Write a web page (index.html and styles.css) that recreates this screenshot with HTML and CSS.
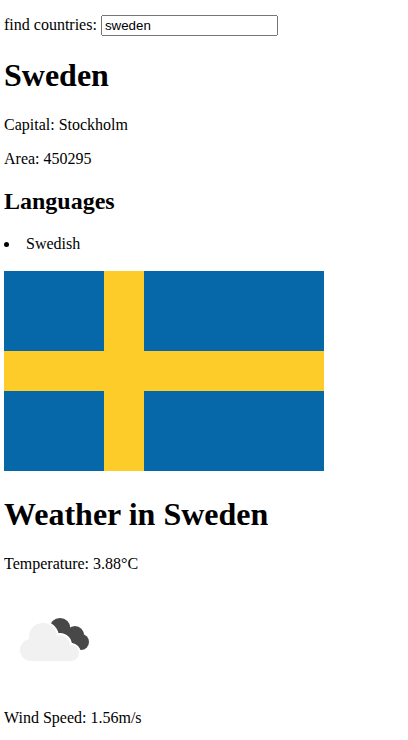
FILE: index.html
```html
<!DOCTYPE html>
<html lang="en">
<head>
  <meta charset="UTF-8">
  <title>Countries</title>
  <link rel="stylesheet" href="styles.css">
</head>
<body>
  <div class="search">
    find countries: <input type="text" value="sweden">
  </div>

  <div>
    <h1>Sweden</h1>
    <p>Capital: Stockholm</p>
    <p>Area: 450295</p>
    <h2>Languages</h2>
    <ul>
      <li>Swedish</li>
    </ul>

    <svg class="flag" width="320" height="200" viewBox="0 0 16 10">
      <rect width="16" height="10" fill="#0768a9"/>
      <rect x="5" width="2" height="10" fill="#fecc28"/>
      <rect y="4" width="16" height="2" fill="#fecc28"/>
    </svg>

    <h1>Weather in Sweden</h1>
    <p>Temperature: 3.88°C</p>

    <svg class="weather" width="100" height="100" viewBox="0 0 100 100">
      <g fill="#484848">
        <circle cx="56" cy="39.500" r="10.500"/>
        <circle cx="71" cy="46" r="9"/>
        <circle cx="77" cy="53" r="8"/>
        <rect x="56" y="40" width="18" height="14"/>
      </g>
      <g fill="#fff" stroke="#fff" stroke-width="4">
        <circle cx="27" cy="61" r="11"/>
        <circle cx="39" cy="48" r="14"/>
        <circle cx="56" cy="56" r="10"/>
        <circle cx="67" cy="64" r="8"/>
        <rect x="27" y="56" width="40" height="16"/>
      </g>
      <g fill="#f1f1f1">
        <circle cx="27" cy="61" r="11"/>
        <circle cx="39" cy="48" r="14"/>
        <circle cx="56" cy="56" r="10"/>
        <circle cx="67" cy="64" r="8"/>
        <rect x="27" y="56" width="40" height="16"/>
      </g>
    </svg>

    <p>Wind Speed: 1.56m/s</p>
  </div>
</body>
</html>
```

FILE: styles.css
```css
body { margin: 15px 4px 0; font-family: "Liberation Serif", "Times New Roman", serif; font-size: 16px; color: #000; background: #fff; }
input { width: 169px; font-family: "Liberation Sans", Arial, sans-serif; font-size: 13.33px; }
ul { padding-left: 0; margin-bottom: 18px; list-style: none; }
li::before { content: ""; display: inline-block; width: 5px; height: 5px; margin-right: 17px; border-radius: 50%; background: #000; vertical-align: 2px; }
.flag { display: inline-block; vertical-align: baseline; }
.weather { display: inline-block; vertical-align: baseline; }
```
